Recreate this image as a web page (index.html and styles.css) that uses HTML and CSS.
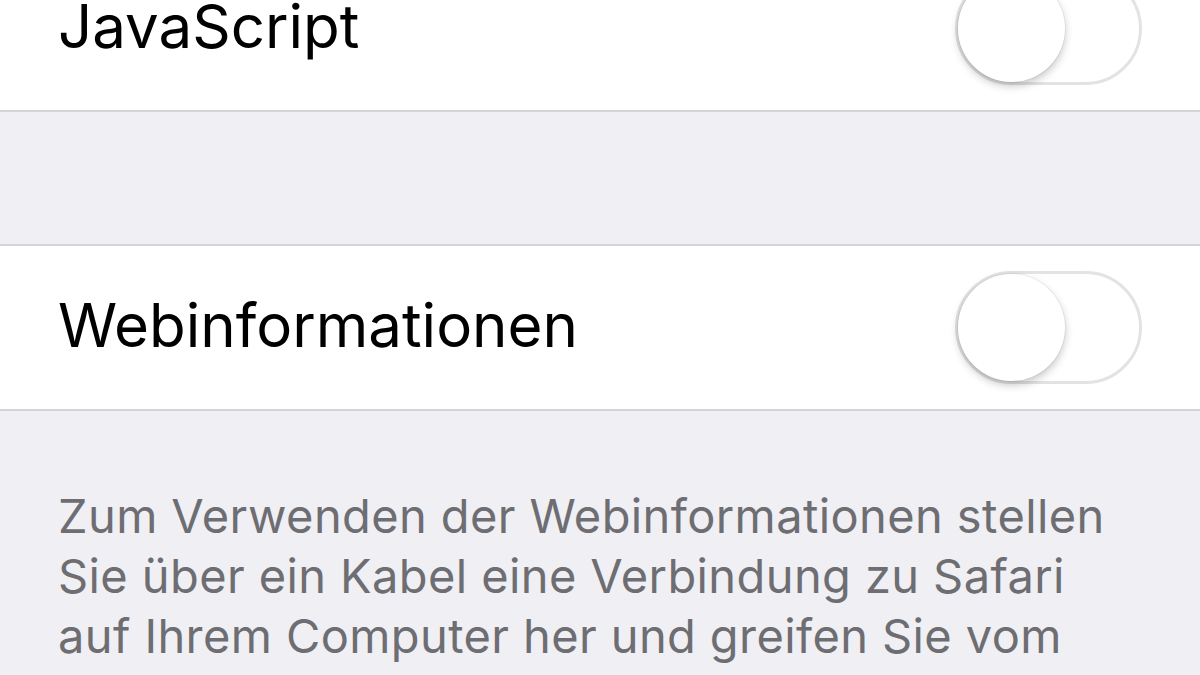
FILE: index.html
```html
<!DOCTYPE html>
<html lang="de">
<head>
  <meta charset="UTF-8" />
  <meta name="viewport" content="width=device-width, initial-scale=1.0" />
  <title>Safari – Erweitert</title>
  <link rel="stylesheet" href="styles.css">
</head>
<body>
  <div class="group group-first">
    <div class="cell">
      <span class="cell-label">JavaScript</span>
      <div class="switch"><div class="knob"></div></div>
    </div>
  </div>

  <div class="group">
    <div class="cell">
      <span class="cell-label">Webinformationen</span>
      <div class="switch"><div class="knob"></div></div>
    </div>
  </div>

  <p class="footer-note">
    Zum Verwenden der Webinformationen stellen<br>
    Sie über ein Kabel eine Verbindung zu Safari<br>
    auf Ihrem Computer her und greifen Sie vom
  </p>
</body>
</html>
```

FILE: styles.css
```css
:root {
  --bg: #efeff4;
  --cell-bg: #ffffff;
  --separator: #d4d4d8;
  --text: #000000;
  --note: #6d6d72;
}

* {
  box-sizing: border-box;
  margin: 0;
  padding: 0;
}

html, body {
  height: 100%;
  overflow: hidden;
}

body {
  background: var(--bg);
  font-family: 'Inter', 'Noto Sans', sans-serif;
  color: var(--text);
}

.group {
  background: var(--cell-bg);
  border-top: 2px solid var(--separator);
  border-bottom: 2px solid var(--separator);
  margin-top: 132px;
}

.group-first {
  margin-top: -55px;
}

.cell {
  height: 163px;
  display: flex;
  align-items: center;
  justify-content: space-between;
  padding: 0 58px 0 58px;
}

.cell-label {
  font-size: 60px;
  font-weight: 400;
  margin-bottom: 6px;
}

.switch {
  width: 187px;
  height: 113px;
  border-radius: 57px;
  border: 3px solid #e3e3e6;
  background: #fff;
  display: flex;
  align-items: center;
}

.knob {
  width: 107px;
  height: 107px;
  border-radius: 50%;
  background: #fff;
  box-shadow: 0 4px 8px rgba(0, 0, 0, 0.22), 0 0 0 1px rgba(0, 0, 0, 0.05);
}

.footer-note {
  padding: 75px 58px 0;
  font-size: 47px;
  line-height: 60px;
  color: var(--note);
  letter-spacing: 0.4px;
}
```
